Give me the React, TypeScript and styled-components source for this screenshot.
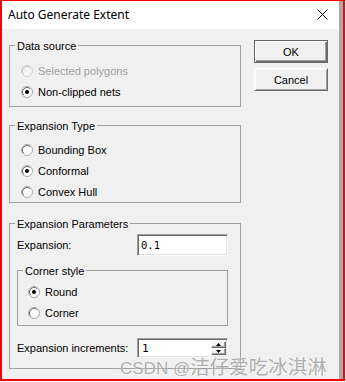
import styled, { createGlobalStyle } from "styled-components";

const GlobalStyle = createGlobalStyle`
  html, body {
    margin: 0;
    padding: 0;
    background: #ffffff;
  }
  body {
    font: 400 11px "Liberation Sans", Arial, sans-serif;
    color: #000000;
  }
`;

const Frame = styled.div`
  position: relative;
  width: 345px;
  height: 381px;
  box-sizing: border-box;
  border: 2px solid #ff0000;
  border-top-width: 1px;
  display: flex;
  flex-direction: column;
`;

const Window = styled.div`
  flex: 1;
  display: flex;
  flex-direction: column;
  border-right: 4px solid #a9a9a9;
`;

const TitleBar = styled.div`
  height: 28px;
  box-sizing: border-box;
  padding: 0 11px 1px 6px;
  background: #ffffff;
  display: flex;
  align-items: center;
  justify-content: space-between;
  font: 400 12px "Noto Sans", "Liberation Sans", sans-serif;
  color: #000000;
`;

const Body = styled.div`
  flex: 1;
  background: #f0f0f0;
  display: flex;
  align-items: flex-start;
  gap: 13px;
  padding: 11px 0 0 7px;
`;

const LeftColumn = styled.div`
  width: 232px;
  padding-top: 5px;
  display: flex;
  flex-direction: column;
`;

const RightColumn = styled.div`
  width: 74px;
  display: flex;
  flex-direction: column;
  gap: 5px;
`;

interface GroupProps {
  $pad: string;
  $mt?: number;
}
const Group = styled.div<GroupProps>`
  position: relative;
  border: 1px solid #a0a0a0;
  padding: ${({ $pad }) => $pad};
  margin-top: ${({ $mt }) => $mt ?? 0}px;
  display: flex;
  flex-direction: column;
`;

const Legend = styled.span`
  position: absolute;
  top: -6px;
  left: 5px;
  padding: 0 2px;
  line-height: 13px;
  background: #f0f0f0;
  white-space: nowrap;
`;

const RadioRow = styled.label<{ $disabled?: boolean }>`
  height: 21px;
  display: flex;
  align-items: center;
  gap: 5px;
  color: ${({ $disabled }) => ($disabled ? "#a0a0a0" : "#000000")};
  white-space: nowrap;

  svg {
    flex: none;
  }
`;

const FieldRow = styled.div<{ $mt: number; $h: number }>`
  display: flex;
  align-items: center;
  justify-content: space-between;
  margin-top: ${({ $mt }) => $mt}px;
  height: ${({ $h }) => $h}px;
`;

const sunken = `
  box-sizing: border-box;
  background: #ffffff;
  border-style: solid;
  border-width: 1px;
  border-color: #a0a0a0 #ffffff #ffffff #a0a0a0;
  box-shadow: inset 1px 1px 0 #696969, inset -1px -1px 0 #e3e3e3;
`;

const TextBox = styled.div`
  ${sunken}
  width: 91px;
  height: 22px;
  padding: 0 0 0 3px;
  display: flex;
  align-items: center;
  font: 400 10.5px "DejaVu Sans Mono", monospace;
  color: #000000;
`;

const SpinBox = styled.div`
  ${sunken}
  width: 91px;
  height: 20px;
  padding: 2px 1px 2px 4px;
  display: flex;
  align-items: center;
  font: 400 11px "DejaVu Sans Mono", monospace;

  span {
    flex: 1;
  }
`;

const SpinButtons = styled.div`
  width: 15px;
  height: 100%;
  display: flex;
  flex-direction: column;
`;

const SpinButton = styled.div`
  flex: 1;
  background: #f0f0f0;
  box-sizing: border-box;
  border-style: solid;
  border-width: 1px;
  border-color: #ffffff #696969 #696969 #ffffff;
  box-shadow: inset -1px -1px 0 #a0a0a0;
  display: flex;
  align-items: center;
  justify-content: center;
`;

interface ButtonProps {
  $default?: boolean;
}
const Button = styled.div<ButtonProps>`
  height: 23px;
  box-sizing: border-box;
  background: #f0f0f0;
  display: flex;
  align-items: center;
  justify-content: center;
  border: 1px solid ${({ $default }) => ($default ? "#646464" : "#ffffff")};
  border-right-color: #696969;
  border-bottom-color: #696969;
  box-shadow: ${({ $default }) =>
    $default
      ? "inset 1px 1px 0 #ffffff, inset -1px -1px 0 #696969, inset -2px -2px 0 #a0a0a0"
      : "inset 1px 1px 0 #f8f8f8, inset -1px -1px 0 #a0a0a0"};
`;

const Watermark = styled.div`
  position: absolute;
  left: 118px;
  top: 350px;
  font: 400 17px "Liberation Sans", "Noto Sans CJK SC", sans-serif;
  color: rgba(110, 110, 110, 0.55);
  text-shadow: 0 0 2px rgba(255, 255, 255, 0.9);
  white-space: nowrap;
  pointer-events: none;

  span {
    font: 400 19.5px "Noto Sans CJK SC", sans-serif;
  }
`;

const CloseIcon = () => (
  <svg width="11" height="11" viewBox="0 0 11 11">
    <path d="M0.5 0.5 L10.5 10.5 M10.5 0.5 L0.5 10.5" stroke="#000" strokeWidth="1" fill="none" />
  </svg>
);

const RadioIcon = ({ checked, disabled }: { checked?: boolean; disabled?: boolean }) => (
  <svg width="12" height="12" viewBox="0 0 12 12">
    <circle cx="6" cy="6" r="5.5" fill={disabled ? "#f4f4f4" : "#ffffff"} stroke={disabled ? "#cfcfcf" : "#a8a8a8"} />
    <path
      d="M2.82 9.18 A4.5 4.5 0 0 1 9.18 2.82"
      stroke={disabled ? "#c4c4c4" : "#6e6e6e"}
      fill="none"
    />
    {checked && <circle cx="6" cy="6" r="2" fill="#000" />}
  </svg>
);

interface RadioProps {
  label: string;
  checked?: boolean;
  disabled?: boolean;
}
const Radio = ({ label, checked, disabled }: RadioProps) => (
  <RadioRow $disabled={disabled}>
    <RadioIcon checked={checked} disabled={disabled} />
    <span>{label}</span>
  </RadioRow>
);

const Arrow = ({ up }: { up?: boolean }) => (
  <svg width="5" height="3" viewBox="0 0 5 3">
    <path d={up ? "M2.5 0 L5 3 L0 3 Z" : "M0 0 L5 0 L2.5 3 Z"} fill="#000" />
  </svg>
);

const App = () => (
  <>
    <GlobalStyle />
    <Frame>
      <Window>
        <TitleBar>
          <span>Auto Generate Extent</span>
          <CloseIcon />
        </TitleBar>
        <Body>
          <LeftColumn>
            <Group $pad="14px 0 4px 11px">
              <Legend>Data source</Legend>
              <Radio label="Selected polygons" disabled />
              <Radio label="Non-clipped nets" checked />
            </Group>
            <Group $pad="13px 0 0 11px" $mt={18}>
              <Legend>Expansion Type</Legend>
              <Radio label="Bounding Box" />
              <Radio label="Conformal" checked />
              <Radio label="Convex Hull" />
            </Group>
            <Group $pad="0 12px 10px 7px" $mt={20}>
              <Legend>Expansion Parameters</Legend>
              <FieldRow $mt={10} $h={22}>
                <span>Expansion:</span>
                <TextBox>0.1</TextBox>
              </FieldRow>
              <Group $pad="10px 0 2px 10px" $mt={14}>
                <Legend>Corner style</Legend>
                <Radio label="Round" checked />
                <Radio label="Corner" />
              </Group>
              <FieldRow $mt={12} $h={20}>
                <span>Expansion increments:</span>
                <SpinBox>
                  <span>1</span>
                  <SpinButtons>
                    <SpinButton>
                      <Arrow up />
                    </SpinButton>
                    <SpinButton>
                      <Arrow />
                    </SpinButton>
                  </SpinButtons>
                </SpinBox>
              </FieldRow>
            </Group>
          </LeftColumn>
          <RightColumn>
            <Button $default>OK</Button>
            <Button>Cancel</Button>
          </RightColumn>
        </Body>
      </Window>
      <Watermark>
        CSDN @<span>洁仔爱吃冰淇淋</span>
      </Watermark>
    </Frame>
  </>
);

export default App;
